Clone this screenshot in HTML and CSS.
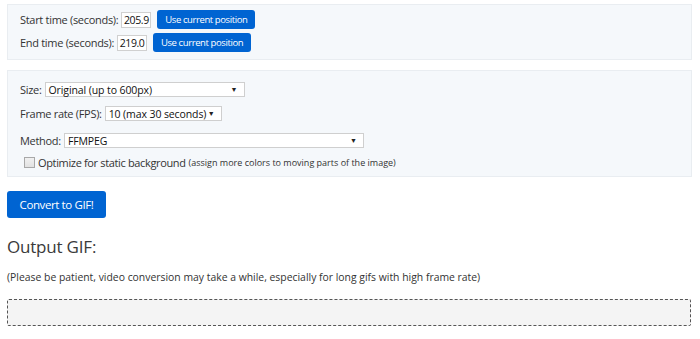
FILE: index.html
```html
<!DOCTYPE html>
<html>
<head>
<meta charset="utf-8">
<link rel="stylesheet" href="styles.css">
</head>
<body>
<div class="page">
  <div class="panel panel-time">
    <div class="row">
      <span class="label">Start time (seconds):</span>
      <span class="num-input">205.9</span>
      <button class="btn btn-small">Use current position</button>
    </div>
    <div class="row">
      <span class="label">End time (seconds):</span>
      <span class="num-input">219.0</span>
      <button class="btn btn-small">Use current position</button>
    </div>
  </div>

  <div class="panel panel-opts">
    <div class="row row-opt">
      <span class="label">Size:</span>
      <span class="select w-size"><span class="sel-text">Original (up to 600px)</span><span class="arrow">▼</span></span>
    </div>
    <div class="row row-opt">
      <span class="label">Frame rate (FPS):</span>
      <span class="select w-fps"><span class="sel-text">10 (max 30 seconds)</span><span class="arrow">▼</span></span>
    </div>
    <div class="row row-opt">
      <span class="label">Method:</span>
      <span class="select w-method"><span class="sel-text">FFMPEG</span><span class="arrow">▼</span></span>
    </div>
    <div class="row row-check">
      <span class="checkbox"></span>
      <span class="check-label">Optimize for static background</span>
      <span class="hint">(assign more colors to moving parts of the image)</span>
    </div>
  </div>

  <button class="btn btn-convert">Convert to GIF!</button>

  <h2 class="out-title">Output GIF:</h2>
  <p class="note">(Please be patient, video conversion may take a while, especially for long gifs with high frame rate)</p>
  <div class="output-box"></div>
</div>
</body>
</html>
```
FILE: styles.css
```css
html, body {
  margin: 0;
  padding: 0;
  background: #ffffff;
}
body {
  font-family: "Open Sans", "Noto Sans", "Liberation Sans", sans-serif;
  font-size: 11px;
  color: #333333;
}
.page {
  padding: 4px 8px 0 7px;
  display: flex;
  flex-direction: column;
  align-items: flex-start;
}
.panel {
  align-self: stretch;
  background: #f5f8fb;
  border: 1px solid #e9edf1;
  box-sizing: border-box;
  padding-left: 12px;
  display: flex;
  flex-direction: column;
}
.panel-time {
  height: 56px;
  padding-top: 5px;
  gap: 4px;
}
.panel-opts {
  margin-top: 10px;
  height: 107px;
  padding-top: 11px;
}
.row {
  display: flex;
  align-items: center;
  height: 19px;
  white-space: nowrap;
}
.label {
  margin-right: 3px;
  letter-spacing: -0.3px;
}
.num-input {
  display: inline-flex;
  align-items: center;
  justify-content: center;
  width: 30px;
  height: 16px;
  box-sizing: border-box;
  background: #fff;
  border: 1px solid #d0d0d0;
  color: #111;
  font-size: 10.5px;
  letter-spacing: -0.4px;
}
.btn {
  font-family: inherit;
  border: none;
  background: #0064d2;
  color: #ffffff;
  border-radius: 3px;
  cursor: pointer;
  padding: 0;
  white-space: nowrap;
}
.btn-small {
  margin-left: 6px;
  width: 98px;
  height: 19px;
  font-size: 9.5px;
  letter-spacing: -0.4px;
}
.row-opt {
  height: 15px;
}
.row-opt + .row-opt {
  margin-top: 9px;
}
.row-opt:nth-child(3) {
  margin-top: 12px;
}
.select {
  display: inline-flex;
  align-items: center;
  justify-content: space-between;
  height: 15px;
  box-sizing: border-box;
  background: #fff;
  border: 1px solid #cfcfcf;
  padding: 0 6px 0 3px;
  color: #111;
  font-size: 10.5px;
  letter-spacing: -0.1px;
}
.w-size { width: 200px; }
.w-fps { width: 117px; }
.w-method { width: 300px; }
.arrow {
  font-size: 7px;
  color: #222;
  letter-spacing: 0;
}
.row-check {
  margin-top: 7px;
  height: 15px;
  padding-left: 4px;
}
.checkbox {
  width: 9px;
  height: 9px;
  border: 1px solid #a8a8a8;
  background: linear-gradient(#f0f0f0, #e2e2e2);
  margin-right: 3px;
}
.check-label {
  font-size: 11px;
  letter-spacing: -0.35px;
  margin-right: 3px;
}
.hint {
  font-size: 9px;
}
.btn-convert {
  margin-top: 14px;
  width: 99px;
  height: 27px;
  font-size: 11.5px;
  letter-spacing: -0.4px;
}
.out-title {
  margin: 17px 0 0 0;
  font-size: 17px;
  font-weight: 400;
  line-height: 24px;
  color: #3a3a3a;
  letter-spacing: -0.2px;
}
.note {
  margin: 11px 0 0 0;
  font-size: 10.4px;
  line-height: 14px;
}
.output-box {
  align-self: stretch;
  margin-top: 15px;
  margin-right: 1px;
  height: 27px;
  box-sizing: border-box;
  background: #f4f4f4;
  border: 1px dashed #555;
  border-radius: 2px;
}
```
